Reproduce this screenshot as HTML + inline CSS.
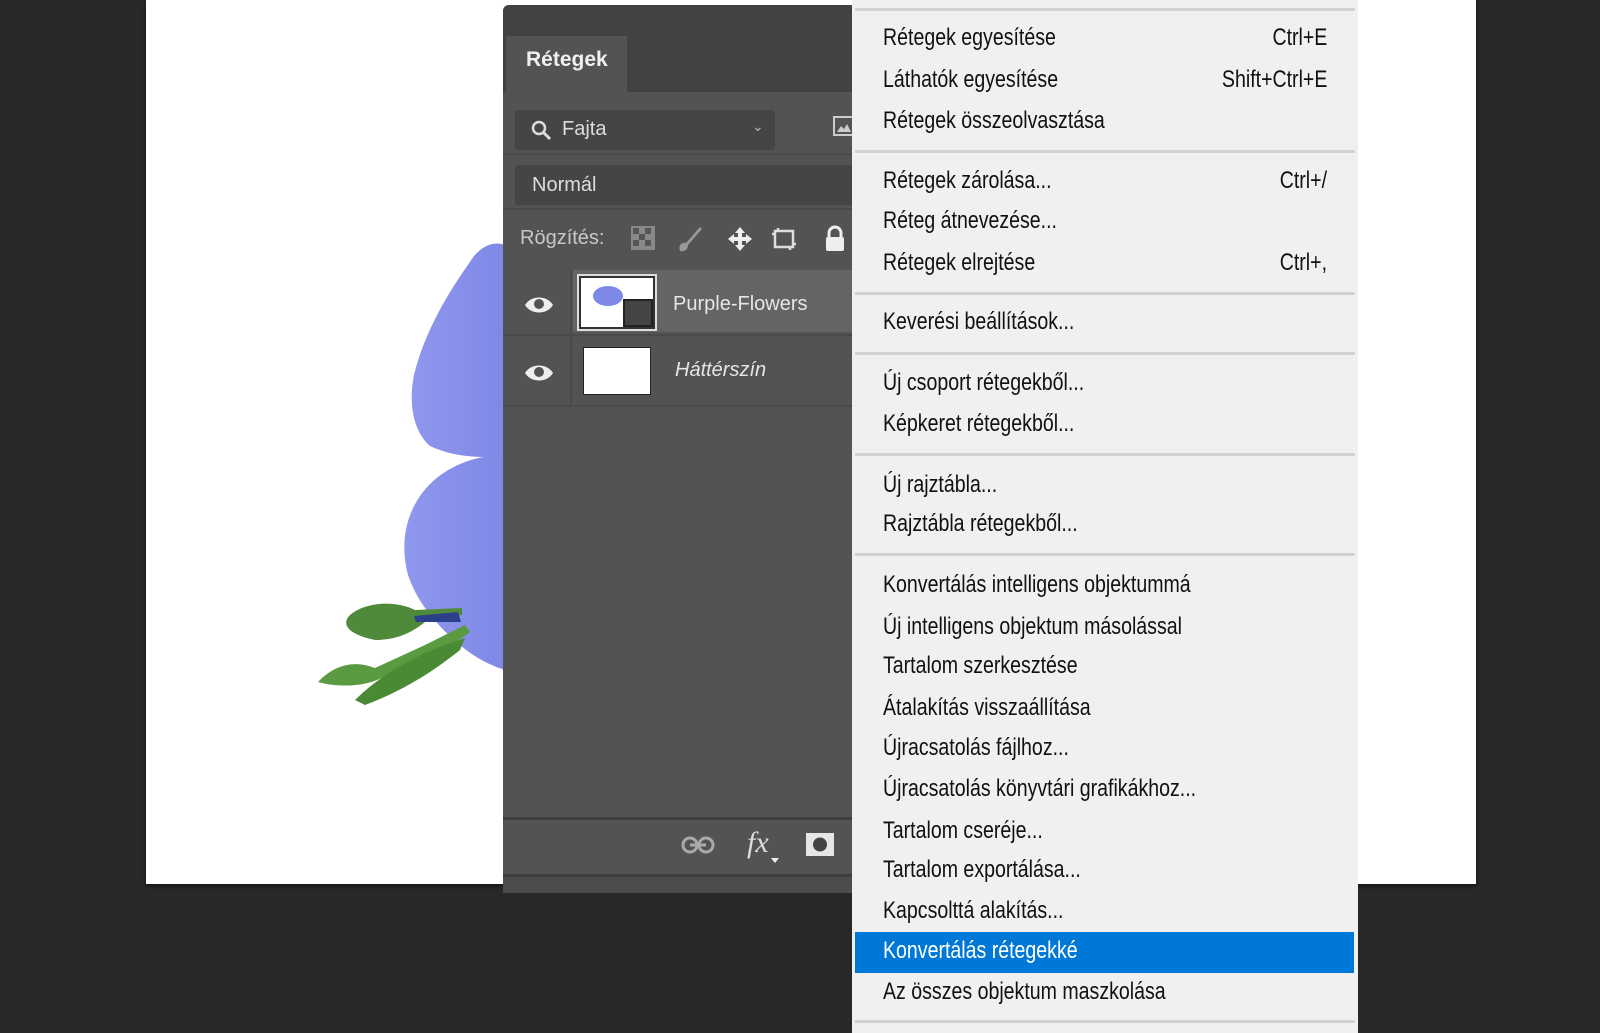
<!DOCTYPE html>
<html><head><meta charset="utf-8"><style>
*{margin:0;padding:0;box-sizing:border-box}
body{width:1600px;height:1033px;background:#282828;position:relative;overflow:hidden;font-family:"Liberation Sans",sans-serif}
.a{position:absolute}
.mi{position:absolute;left:883px;height:28px;line-height:28px;font-size:24px;color:#111;white-space:nowrap;transform:scaleX(0.815);transform-origin:left center}
.sc{position:absolute;right:273px;height:28px;line-height:28px;font-size:24px;color:#111;white-space:nowrap;transform:scaleX(0.815);transform-origin:right center}
.sep{position:absolute;left:855px;width:500px;height:3px;background:#d2d2d2}
.pt{color:#ddd;font-size:20px;position:absolute;white-space:nowrap}
</style></head><body>
<div class="a" style="left:146px;top:0;width:1330px;height:884px;background:#fff;box-shadow:0 2px 4px rgba(0,0,0,.5)"></div>
<svg class="a" style="left:290px;top:220px" width="220" height="500" viewBox="290 220 220 500">
<defs><linearGradient id="p" x1="0" x2="1"><stop offset="0" stop-color="#8f97ee"/><stop offset="1" stop-color="#7f88e6"/></linearGradient></defs>
<path d="M505 245 C492 240 478 248 470 262 C450 290 425 330 414 375 C408 405 414 432 430 446 C455 458 485 458 505 456 Z" fill="url(#p)"/>
<path d="M505 455 C470 455 440 470 423 492 C405 515 400 545 408 575 C418 605 440 628 460 645 C475 658 492 666 505 670 Z" fill="url(#p)"/>
<path d="M415 610 C395 600 365 602 350 615 C340 625 350 635 375 640 C400 640 415 630 425 622 L462 615 L462 608 Z" fill="#4f8a3a"/>
<path d="M414 616 L458 612 L461 622 L416 622 Z" fill="#2c3f8a"/>
<path d="M375 668 C355 660 335 664 318 682 C335 687 360 687 377 680 L445 650 L470 632 L465 625 L425 645 Z" fill="#5a9a40"/>
<path d="M355 700 C375 680 405 660 445 645 L465 638 L460 650 C435 670 405 690 365 705 Z" fill="#4a8a35"/>
</svg>
<!-- panel -->
<div class="a" style="left:503px;top:5px;width:360px;height:888px;background:#535353;border-radius:6px 0 0 0"></div>
<div class="a" style="left:503px;top:5px;width:360px;height:87px;background:#424242;border-radius:6px 0 0 0"></div>
<div class="a" style="left:506px;top:36px;width:121px;height:56px;background:#535353"></div>
<div class="a" style="left:526px;top:48px;font-size:21px;font-weight:bold;color:#f0f0f0">Rétegek</div>
<div class="a" style="left:515px;top:110px;width:260px;height:40px;background:#454545;border-radius:3px"></div>
<svg class="a" style="left:530px;top:119px" width="24" height="24"><circle cx="9" cy="9" r="6" fill="none" stroke="#ddd" stroke-width="2.5"/><path d="M13 13 L20 20" stroke="#ddd" stroke-width="3"/></svg>
<div class="pt" style="left:562px;top:118px">Fajta</div>
<div class="pt" style="left:752px;top:118px;font-size:14px;color:#bbb">⌄</div>
<svg class="a" style="left:833px;top:116px" width="20" height="22"><rect x="1" y="1" width="24" height="18" fill="none" stroke="#ccc" stroke-width="2"/><path d="M4 16 L8 10 L11 13 L14 8 L18 16 Z" fill="#ccc"/></svg>
<div class="a" style="left:503px;top:153px;width:360px;height:2px;background:#4a4a4a"></div>
<div class="a" style="left:515px;top:165px;width:345px;height:40px;background:#454545;border-radius:3px"></div>
<div class="pt" style="left:532px;top:174px">Normál</div>
<div class="a" style="left:503px;top:208px;width:360px;height:2px;background:#4a4a4a"></div>
<div class="pt" style="left:520px;top:227px;color:#c8c8c8">Rögzítés:</div>
<svg class="a" style="left:630px;top:225px" width="230" height="30">
<rect x="1" y="1" width="24" height="24" fill="#888"/><rect x="3" y="3" width="6" height="6" fill="#555"/><rect x="15" y="3" width="6" height="6" fill="#555"/><rect x="9" y="9" width="6" height="6" fill="#555"/><rect x="3" y="15" width="6" height="6" fill="#555"/><rect x="15" y="15" width="6" height="6" fill="#555"/>
<path d="M50 26 C48 20 52 17 56 18 L70 2 L72 4 L58 20 C58 25 54 27 50 26Z" fill="#999"/>
<path d="M110 2 L115 8 H112 V12 H116 V9 L122 14 L116 19 V16 H112 V20 H115 L110 26 L105 20 H108 V16 H104 V19 L98 14 L104 9 V12 H108 V8 H105 Z" fill="#eee"/>
<path d="M145 6 H163 V22 H145 Z M148 3 V6 M160 22 V25 M142 9 H145 M163 19 H166" stroke="#ddd" stroke-width="2.5" fill="none"/>
<rect x="196" y="12" width="18" height="14" rx="2" fill="#eee"/><path d="M199 12 V8 a6 6 0 0 1 12 0 V12" stroke="#eee" stroke-width="3" fill="none"/>
</svg>
<div class="a" style="left:503px;top:270px;width:360px;height:62px;background:#535353"></div>
<div class="a" style="left:573px;top:270px;width:290px;height:62px;background:#646464"></div>
<div class="a" style="left:503px;top:334px;width:360px;height:2px;background:#4a4a4a"></div>
<div class="a" style="left:570px;top:270px;width:2px;height:135px;background:#4a4a4a"></div>
<div class="a" style="left:503px;top:405px;width:360px;height:2px;background:#4a4a4a"></div>
<svg class="a" style="left:523px;top:293px" width="32" height="24"><path d="M2 12 C8 2 24 2 30 12 C24 22 8 22 2 12Z" fill="#eee"/><circle cx="16" cy="11" r="5" fill="#535353"/></svg>
<svg class="a" style="left:523px;top:361px" width="32" height="24"><path d="M2 12 C8 2 24 2 30 12 C24 22 8 22 2 12Z" fill="#eee"/><circle cx="16" cy="11" r="5" fill="#535353"/></svg>
<div class="a" style="left:577px;top:274px;width:80px;height:57px;border:2px solid #ddd;background:#333;padding:2px"><div style="width:100%;height:100%;background:#fff;position:relative"><div style="position:absolute;left:12px;top:8px;width:30px;height:20px;background:#7f88e6;border-radius:50%"></div><div style="position:absolute;right:0;bottom:0;width:30px;height:28px;background:#444;border:2px solid #222"></div></div></div>
<div class="a" style="left:583px;top:347px;width:68px;height:48px;background:#fff;border:1px solid #222"></div>
<div class="pt" style="left:673px;top:293px;color:#e6e6e6">Purple-Flowers</div>
<div class="pt" style="left:675px;top:359px;font-style:italic;color:#e6e6e6">Háttérszín</div>
<div class="a" style="left:503px;top:817px;width:360px;height:3px;background:#3e3e3e"></div>
<div class="a" style="left:503px;top:874px;width:360px;height:3px;background:#3e3e3e"></div>
<div class="a" style="left:503px;top:877px;width:360px;height:16px;background:#4c4c4c"></div>
<svg class="a" style="left:680px;top:833px" width="36" height="24"><rect x="3" y="5" width="14" height="14" rx="7" fill="none" stroke="#aaa" stroke-width="3"/><rect x="19" y="5" width="14" height="14" rx="7" fill="none" stroke="#aaa" stroke-width="3"/><path d="M10 12 H26" stroke="#aaa" stroke-width="3"/></svg>
<div class="a" style="left:747px;top:826px;font-size:30px;font-style:italic;color:#ddd;font-family:'Liberation Serif',serif">fx</div>
<div class="a" style="left:771px;top:858px;width:0;height:0;border-left:4px solid transparent;border-right:4px solid transparent;border-top:5px solid #eee"></div>
<svg class="a" style="left:805px;top:832px" width="30" height="26"><rect x="1" y="1" width="28" height="23" fill="#e6e6e6"/><circle cx="15" cy="12.5" r="7" fill="#444"/></svg>
<!-- menu -->
<div class="a" style="left:852px;top:0;width:506px;height:1033px;background:#f0f0f0"></div>
<div class="sep" style="top:8px"></div>
<div class="mi" style="top:24px">Rétegek egyesítése</div><div class="sc" style="top:24px">Ctrl+E</div>
<div class="mi" style="top:66px">Láthatók egyesítése</div><div class="sc" style="top:66px">Shift+Ctrl+E</div>
<div class="mi" style="top:107px">Rétegek összeolvasztása</div>
<div class="sep" style="top:150px"></div>
<div class="mi" style="top:167px">Rétegek zárolása...</div><div class="sc" style="top:167px">Ctrl+/</div>
<div class="mi" style="top:207px">Réteg átnevezése...</div>
<div class="mi" style="top:249px">Rétegek elrejtése</div><div class="sc" style="top:249px">Ctrl+,</div>
<div class="sep" style="top:292px"></div>
<div class="mi" style="top:308px">Keverési beállítások...</div>
<div class="sep" style="top:352px"></div>
<div class="mi" style="top:369px">Új csoport rétegekből...</div>
<div class="mi" style="top:410px">Képkeret rétegekből...</div>
<div class="sep" style="top:453px"></div>
<div class="mi" style="top:471px">Új rajztábla...</div>
<div class="mi" style="top:510px">Rajztábla rétegekből...</div>
<div class="sep" style="top:553px"></div>
<div class="mi" style="top:571px">Konvertálás intelligens objektummá</div>
<div class="mi" style="top:613px">Új intelligens objektum másolással</div>
<div class="mi" style="top:652px">Tartalom szerkesztése</div>
<div class="mi" style="top:694px">Átalakítás visszaállítása</div>
<div class="mi" style="top:734px">Újracsatolás fájlhoz...</div>
<div class="mi" style="top:775px">Újracsatolás könyvtári grafikákhoz...</div>
<div class="mi" style="top:817px">Tartalom cseréje...</div>
<div class="mi" style="top:856px">Tartalom exportálása...</div>
<div class="mi" style="top:897px">Kapcsolttá alakítás...</div>
<div class="a" style="left:855px;top:932px;width:499px;height:41px;background:#0078d7"></div>
<div class="mi" style="top:937px;color:#fff">Konvertálás rétegekké</div>
<div class="mi" style="top:978px">Az összes objektum maszkolása</div>
<div class="sep" style="top:1020px"></div>
</body></html>
